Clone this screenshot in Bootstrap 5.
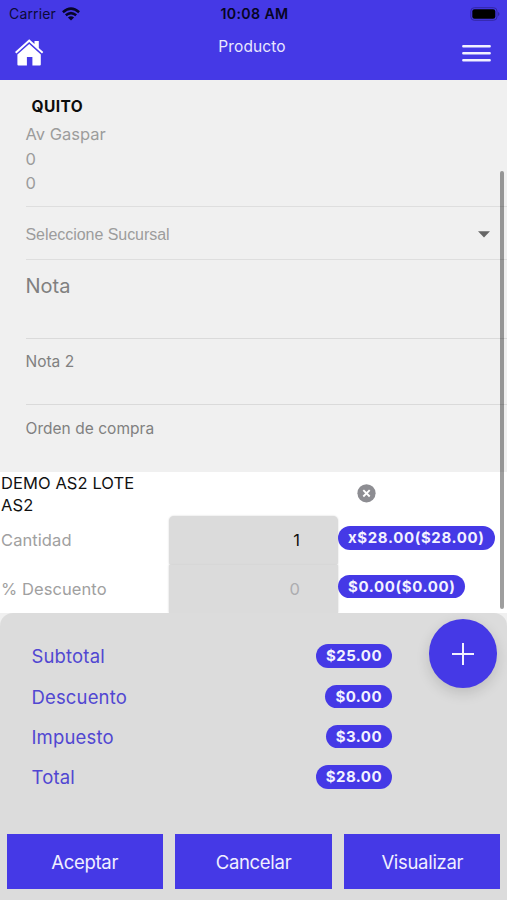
<!DOCTYPE html>
<html lang="es">
<head>
<meta charset="utf-8">
<meta name="viewport" content="width=device-width, initial-scale=1">
<title>Producto</title>
<link href="https://cdn.jsdelivr.net/npm/bootstrap@5.3.0/dist/css/bootstrap.min.css" rel="stylesheet">
<style>
  :root { --brand: #4539e6; }
  body { font-family: Inter, "Liberation Sans", sans-serif; background: #f0f0f0; height: 900px; overflow: hidden; }
  svg { display: block; }
  .app-header { background: var(--brand); height: 80px; }
  .status-bar { display: grid; grid-template-columns: 1fr auto 1fr; height: 27px; padding: 0 7px 0 9px; color: #0c0a38; font-size: 14px; }
  .clock { font-weight: 600; font-size: 14.2px; letter-spacing: .35px; color: #060524; }
  .carrier { letter-spacing: .15px; }
  .wifi-icon { margin-left: 2px; }
  .title-bar { display: grid; grid-template-columns: 1fr auto 1fr; height: 53px; padding: 0 16px 0 15px; }
  .page-title { font-size: 15.5px; line-height: 20px; margin-top: 10px; color: #e9e7ff; margin-right: 2px; letter-spacing: .1px; }
  .home-icon { margin-top: 12px; }
  .menu-icon { margin-top: 16px; }
  .details { height: 392px; padding-left: 25.5px; color: #9c9c9c; font-size: 16.5px; }
  .address { height: 127px; padding-top: 13px; line-height: 24.5px; border-bottom: 1px solid #dedede; }
  .place { color: #0d0d0d; font-weight: 700; font-size: 15.5px; letter-spacing: .4px; line-height: 28px; padding-left: 6px; margin-bottom: 1px; }
  .branch { height: 53px; border-bottom: 1px solid #dedede; padding-right: 17px; font-family: "Liberation Sans", sans-serif; font-size: 16px; letter-spacing: -.05px; }
  .branch span { padding-top: 4px; }
  .branch svg { margin-top: 2px; }
  .field { border-bottom: 1px solid #dadada; color: #808080; font-size: 15.5px; line-height: 20px; }
  .field-note { height: 79px; padding-top: 16px; font-size: 20px; }
  .field-note2 { height: 66px; padding-top: 13px; }
  .field-order { height: 67px; padding-top: 13.5px; border-bottom: 0; letter-spacing: .04px; }
  .product { height: 141px; background: #fff; }
  .product-name { height: 44px; line-height: 22px; font-size: 16.5px; letter-spacing: .08px; color: #111; padding-left: 1px; }
  .remove-icon { margin: 12px 0 0 19px; }
  .product-line { height: 48.5px; }
  .line-label { color: #a0a0a0; font-size: 16.5px; letter-spacing: .08px; padding-left: 1px; padding-top: 1px; }
  .qty { height: 48.5px; background: #dbdbdb; text-align: right; padding-right: 38px; font-size: 16.5px; color: #111; box-shadow: 0 0 2px #d0d0d0; line-height: 49px; }
  .qty-first { border-radius: 5px 5px 3px 3px; }
  .qty-empty { color: #adadb0; }
  .pill { background: var(--brand); color: #f3f2ff; font-weight: 700; font-size: 15px; line-height: 23.5px; height: 23.5px; border-radius: 12px; padding: 0 10px; white-space: nowrap; letter-spacing: .45px; }
  .product-line .pill { letter-spacing: .63px; margin-bottom: 5px; }
  .under { background: #f0f0f0; }
  .summary { height: 287px; background: #dcdcdc; border-radius: 13px 13px 0 0; padding-top: 23px; }
  .totals { width: 392px; padding-left: 31.5px; color: #5147d2; font-size: 18.5px; letter-spacing: .15px; }
  .total-row { height: 40.3px; }
  .total-label { padding-top: 2px; }
  .actions { gap: 12.5px; padding: 0 6.5px; margin-top: 37.3px; }
  .action { background: var(--brand); color: #f0efff; height: 54.5px; border: 0; border-radius: 0; font-size: 18.5px; letter-spacing: -.3px; flex: 1 1 0; padding: 2px 0 0; }
  .fab { position: absolute; left: 428.5px; top: 619.3px; width: 68.5px; height: 68.5px; background: var(--brand); border: 0; border-radius: 50%; box-shadow: 0 5px 14px rgba(0,0,0,.14); padding: 0; }
  .scroll-thumb { position: absolute; left: 499.5px; top: 171px; width: 4px; height: 438px; border-radius: 2px; background: rgba(0,0,0,.38); }
</style>
<script src="https://cdn.jsdelivr.net/npm/bootstrap@5.3.0/dist/js/bootstrap.bundle.min.js"></script>
</head>
<body class="d-flex flex-column position-relative">
<header class="app-header flex-shrink-0">
  <div class="status-bar align-items-center">
    <div class="d-flex align-items-center">
      <span class="carrier me-1">Carrier</span>
      <svg class="wifi-icon" width="18" height="14" viewBox="0 0 18 14" fill="none" stroke="#070529" stroke-width="2.5"><path d="M.9 5.2Q9-2 17.1 5.2M3.8 8.3Q9 3.9 14.2 8.3"/><path d="M9 13.6 5.9 10.4Q9 8 12.1 10.4Z" fill="#070529" stroke="none"/></svg>
    </div>
    <span class="clock">10:08 AM</span>
    <svg class="ms-auto" width="30" height="14" viewBox="0 0 30 14"><rect x=".8" y=".7" width="26.2" height="12.6" rx="3.5" fill="none" stroke="#3227a5"/><rect x="2.3" y="2.2" width="23" height="9.6" rx="2.2" fill="#000"/><path d="M28 5v4q1.5-.6 1.5-2T28 5Z" fill="#3227a5"/></svg>
  </div>
  <nav class="title-bar">
    <a href="#" aria-label="Inicio"><svg class="home-icon" width="29" height="28" viewBox="0 0 29 28" fill="#fff"><path d="M14.2.3 19.5 5V2h4.3v7l4.5 4-1.3 1.6L14.2 3.1 1.4 14.6 0 13Z"/><path d="M14.2 5 25.8 15.4V25.6q0 1-1 1H17.4V18h-5.5v8.6H3.4q-1 0-1-1V15.6Z"/></svg></a>
    <span class="page-title">Producto</span>
    <a href="#" class="ms-auto" aria-label="Menú"><svg class="menu-icon" width="29" height="20" viewBox="0 0 29 20" stroke="#f2f1ff" stroke-width="2.4" stroke-linecap="round"><path d="M1.3 3.2h26.4M1.3 10.2h26.4M1.3 17.3h26.4"/></svg></a>
  </nav>
</header>

<main class="flex-shrink-0">
  <section class="details">
    <div class="address">
      <div class="place">QUITO</div>
      <div>Av Gaspar</div>
      <div>0</div>
      <div>0</div>
    </div>
    <div class="branch d-flex align-items-center justify-content-between">
      <span>Seleccione Sucursal</span>
      <svg width="12" height="7" viewBox="0 0 12 7" fill="#666"><path d="M0 .3h12L6 6.6Z"/></svg>
    </div>
    <div class="field field-note">Nota</div>
    <div class="field field-note2">Nota 2</div>
    <div class="field field-order">Orden de compra</div>
  </section>

  <section class="product">
    <div class="row g-0">
      <div class="col-4 product-name">DEMO AS2 LOTE AS2</div>
      <div class="col-4 offset-4">
        <svg class="remove-icon" width="19" height="19" viewBox="0 0 19 19"><circle cx="9.5" cy="9.3" r="9.1" fill="#8d8d92"/><path d="m6.3 6.1 6.4 6.4m0-6.4-6.4 6.4" stroke="#fff" stroke-width="1.9"/></svg>
      </div>
    </div>
    <div class="row g-0 product-line align-items-center">
      <div class="col-4 line-label">Cantidad</div>
      <div class="col-4 qty qty-first">1</div>
      <div class="col-4 d-flex"><span class="pill">x$28.00($28.00)</span></div>
    </div>
    <div class="row g-0 product-line align-items-center">
      <div class="col-4 line-label">% Descuento</div>
      <div class="col-4 qty qty-empty">0</div>
      <div class="col-4 d-flex"><span class="pill">$0.00($0.00)</span></div>
    </div>
  </section>
</main>

<footer class="under position-relative flex-shrink-0">
  <div class="summary">
    <div class="totals">
      <div class="total-row d-flex align-items-center justify-content-between"><span class="total-label">Subtotal</span><span class="pill">$25.00</span></div>
      <div class="total-row d-flex align-items-center justify-content-between"><span class="total-label">Descuento</span><span class="pill">$0.00</span></div>
      <div class="total-row d-flex align-items-center justify-content-between"><span class="total-label">Impuesto</span><span class="pill">$3.00</span></div>
      <div class="total-row d-flex align-items-center justify-content-between"><span class="total-label">Total</span><span class="pill">$28.00</span></div>
    </div>
    <div class="actions d-flex">
      <button class="btn action">Aceptar</button>
      <button class="btn action">Cancelar</button>
      <button class="btn action">Visualizar</button>
    </div>
  </div>
</footer>

<button class="fab d-flex align-items-center justify-content-center" aria-label="Agregar"><svg width="22" height="22" viewBox="0 0 22 22" stroke="#f2f1ff" stroke-width="2"><path d="M11 0v22M0 11h22"/></svg></button>
<div class="scroll-thumb"></div>
</body>
</html>
